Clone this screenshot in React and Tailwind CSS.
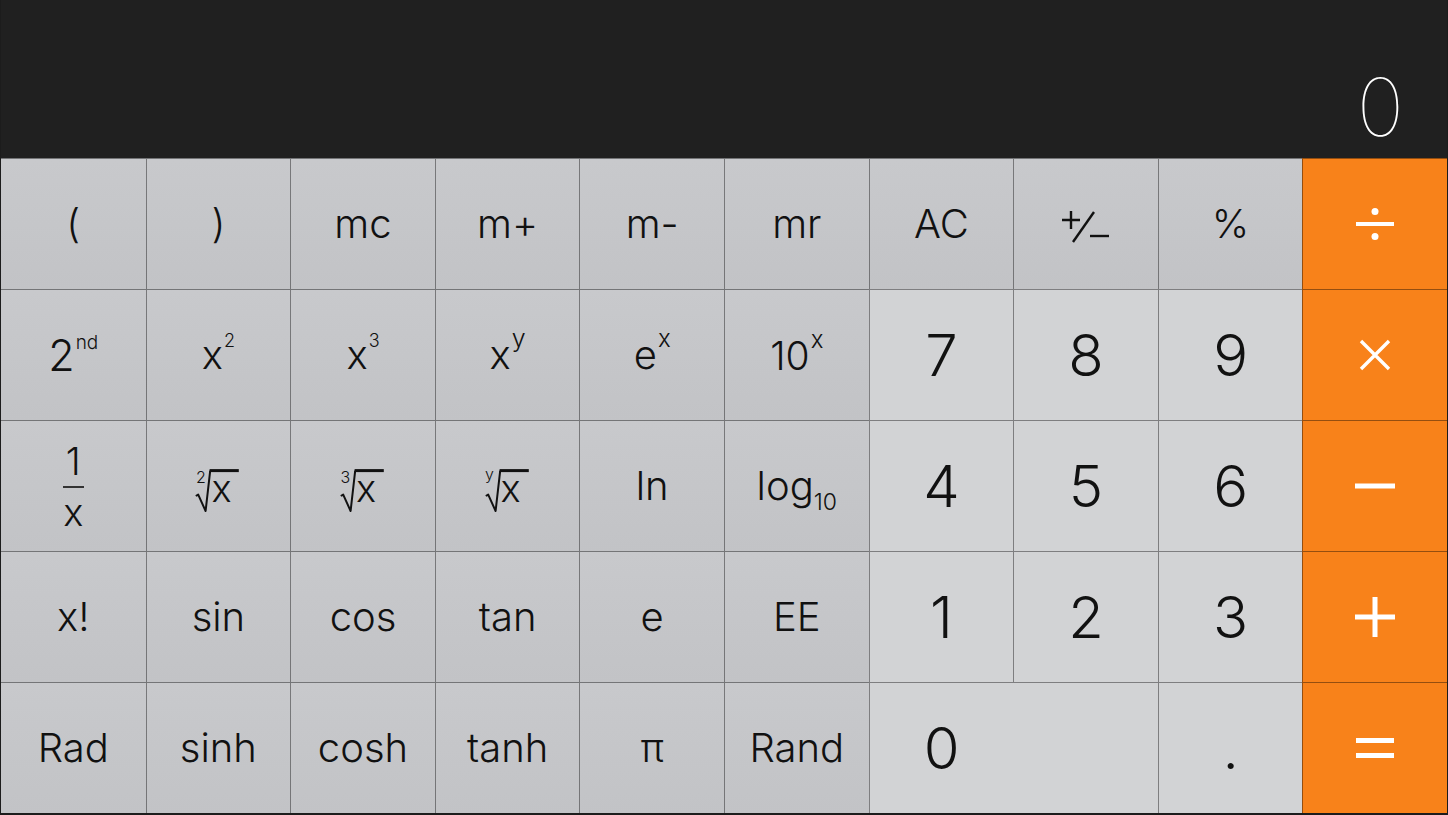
import React from 'react';
import clsx from 'clsx';

// little stacked/raised labels used on the scientific keys
const Sup = ({ base, sup, baseSize = 'text-[40px]', supSize = 'text-[18px]' }) => (
  <span className={clsx('leading-none whitespace-nowrap', baseSize)}>
    {base}
    <span className={clsx('relative -top-[22px] ml-[1px]', supSize)}>{sup}</span>
  </span>
);

const Radical = ({ idx, idxTop = 'top-[2px]' }) => (
  <span className="relative inline-block w-[46px] h-[46px] mt-[7px]">
    <svg className="absolute left-0 top-0" width="46" height="46" viewBox="0 0 46 46" fill="none" stroke="#111">
      <path d="M0.8 29 L3.2 27.6 L10.6 44 L15.2 3.6" strokeWidth="2" strokeLinejoin="round" />
      <path d="M14.6 3.6 L43.8 3.6" strokeWidth="3" />
    </svg>
    <span className={clsx('absolute left-[0.5px] text-[16px] leading-none', idxTop)}>{idx}</span>
    <span className="absolute left-[16px] top-[2px] text-[38px] leading-none">x</span>
  </span>
);

const Fraction = () => (
  <span className="flex flex-col items-center">
    <span className="block h-[38px] text-[38px] leading-none">1</span>
    <span className="block w-[21px] h-[2px] mt-[6px] bg-[#333]" />
    <span className="block h-[38px] mt-[5px] text-[38px] leading-none">x</span>
  </span>
);

const PlusMinus = () => (
  <svg width="51" height="36" viewBox="0 0 51 36" fill="none" stroke="#111" strokeWidth="2.4" className="mt-[6px]">
    <path d="M2 11 H20 M11 2 V20" />
    <path d="M13 33 L34 3" />
    <path d="M30 27 H49" />
  </svg>
);

const Divide = () => (
  <svg width="40" height="34" viewBox="0 0 40 34" fill="#fff">
    <rect x="1" y="15" width="38" height="4" />
    <circle cx="20" cy="4.5" r="3.5" />
    <circle cx="20" cy="29.5" r="3.5" />
  </svg>
);

const Times = () => (
  <svg width="32" height="32" viewBox="0 0 32 32" stroke="#fff" strokeWidth="3.4" fill="none">
    <path d="M2 2 L30 30 M30 2 L2 30" />
  </svg>
);

const Minus = () => (
  <svg width="40" height="6" viewBox="0 0 40 6" fill="#fff">
    <rect x="0" y="0.5" width="40" height="5" />
  </svg>
);

const Plus = () => (
  <svg width="40" height="40" viewBox="0 0 40 40" fill="#fff">
    <rect x="0" y="17.5" width="40" height="5" />
    <rect x="17.5" y="0" width="5" height="40" />
  </svg>
);

const Equals = () => (
  <svg width="38" height="20" viewBox="0 0 38 20" fill="#fff">
    <rect x="0" y="0" width="38" height="5" />
    <rect x="0" y="15" width="38" height="5" />
  </svg>
);

const Key = ({ children, kind = 'fn', first, wide }) => (
  <div
    className={clsx(
      'flex items-center border-t border-black/40',
      wide ? 'col-span-2 justify-start' : 'justify-center',
      !first && 'border-l',
      kind === 'op' && 'bg-[#f8821a] text-white',
      kind === 'num' && 'bg-[#d2d3d5] text-[#111]',
      kind === 'fn' && 'bg-gradient-to-b from-[#c8c9cc] to-[#c2c3c6] text-[#111]'
    )}
  >
    {children}
  </div>
);

const T = ({ children }) => <span className="text-[40px] leading-none">{children}</span>;
const N = ({ children }) => <span className="text-[58px] leading-none">{children}</span>;

export default function App() {
  return (
    <div className="w-[1448px] h-[815px] flex flex-col bg-[#202020] border-x border-b-2 border-[#1c1c1c] overflow-hidden font-['Inter',sans-serif] font-light">
      <div className="h-[158px] flex justify-end pr-[43px] pt-[67px]">
        <span className="text-white text-[80px] leading-none font-thin">0</span>
      </div>

      <div className="flex-1 grid grid-cols-10 grid-rows-5">
        {/* row 1 */}
        <Key first><T>(</T></Key>
        <Key><T>)</T></Key>
        <Key><T>mc</T></Key>
        <Key><T>m+</T></Key>
        <Key><T>m-</T></Key>
        <Key><T>mr</T></Key>
        <Key><T>AC</T></Key>
        <Key><PlusMinus /></Key>
        <Key><T>%</T></Key>
        <Key kind="op"><Divide /></Key>

        {/* row 2 */}
        <Key first><Sup base="2" sup="nd" baseSize="text-[43px]" supSize="text-[19px]" /></Key>
        <Key><Sup base="x" sup="2" /></Key>
        <Key><Sup base="x" sup="3" /></Key>
        <Key><Sup base="x" sup="y" supSize="text-[25px]" /></Key>
        <Key><Sup base="e" sup="x" supSize="text-[24px]" /></Key>
        <Key><Sup base="10" sup="x" baseSize="text-[39px]" supSize="text-[24px]" /></Key>
        <Key kind="num"><N>7</N></Key>
        <Key kind="num"><N>8</N></Key>
        <Key kind="num"><N>9</N></Key>
        <Key kind="op"><Times /></Key>

        {/* row 3 */}
        <Key first><Fraction /></Key>
        <Key><Radical idx="2" /></Key>
        <Key><Radical idx="3" /></Key>
        <Key><Radical idx="y" idxTop="-top-[1px]" /></Key>
        <Key><T>ln</T></Key>
        <Key>
          <span className="text-[40px] leading-none whitespace-nowrap">
            log<span className="relative top-[10px] text-[23px]">10</span>
          </span>
        </Key>
        <Key kind="num"><N>4</N></Key>
        <Key kind="num"><N>5</N></Key>
        <Key kind="num"><N>6</N></Key>
        <Key kind="op"><Minus /></Key>

        {/* row 4 */}
        <Key first><T>x!</T></Key>
        <Key><T>sin</T></Key>
        <Key><T>cos</T></Key>
        <Key><T>tan</T></Key>
        <Key><T>e</T></Key>
        <Key><T>EE</T></Key>
        <Key kind="num"><N>1</N></Key>
        <Key kind="num"><N>2</N></Key>
        <Key kind="num"><N>3</N></Key>
        <Key kind="op"><Plus /></Key>

        {/* row 5 */}
        <Key first><T>Rad</T></Key>
        <Key><T>sinh</T></Key>
        <Key><T>cosh</T></Key>
        <Key><T>tanh</T></Key>
        <Key><T>π</T></Key>
        <Key><T>Rand</T></Key>
        <Key kind="num" wide>
          <span className="w-1/2 text-center"><N>0</N></span>
        </Key>
        <Key kind="num"><N>.</N></Key>
        <Key kind="op"><Equals /></Key>
      </div>
    </div>
  );
}
